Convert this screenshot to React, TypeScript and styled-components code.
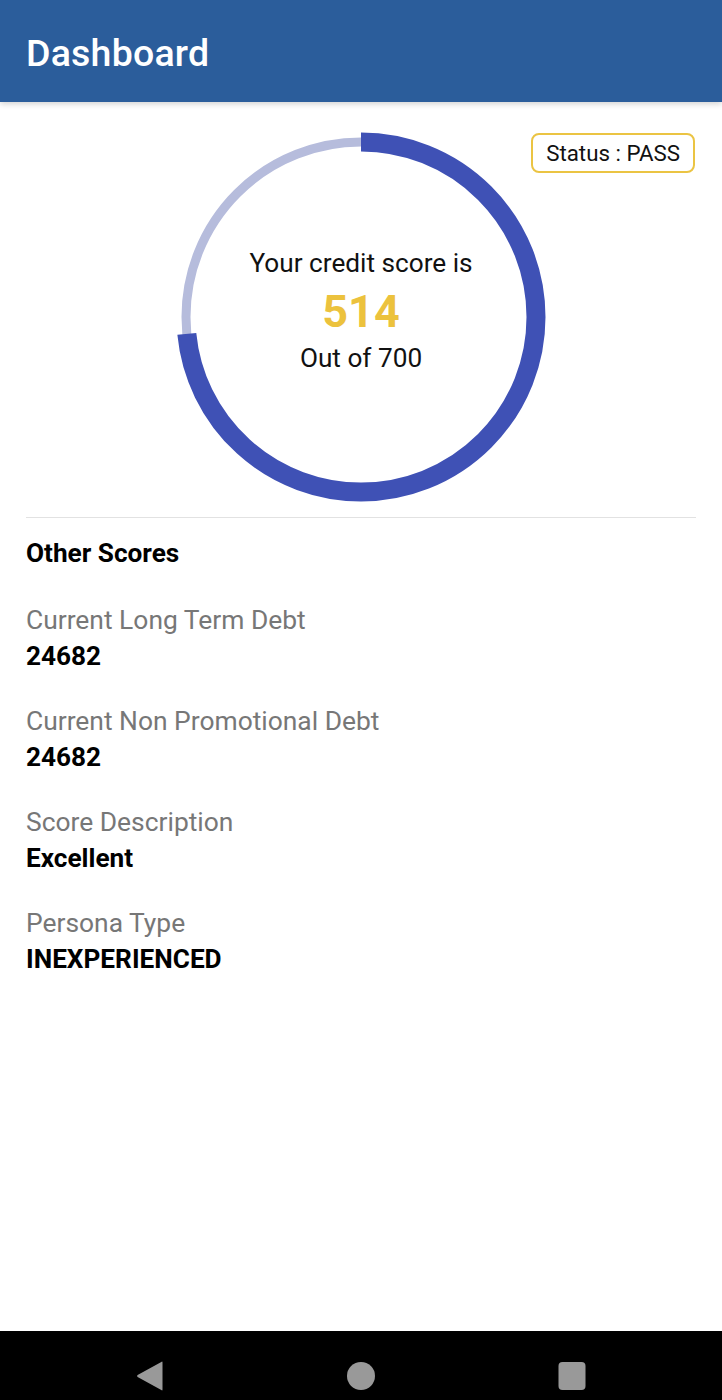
import { FC } from 'react'
import styled, { createGlobalStyle } from 'styled-components'

const GlobalStyle = createGlobalStyle`
  html, body {
    margin: 0;
    padding: 0;
    background: #ffffff;
  }
  body {
    font-family: Roboto, 'Noto Sans', sans-serif;
    color: #000000;
  }
`

const score: number = 514
const maxScore: number = 700
const radius: number = 175
const circumference: number = 2 * Math.PI * radius

const Screen = styled.div`
  display: flex;
  flex-direction: column;
  height: 1400px;
  overflow: hidden;
`

const AppBar = styled.header`
  height: 102px;
  flex-shrink: 0;
  box-sizing: border-box;
  background-color: #2b5d9b;
  display: flex;
  align-items: center;
  padding: 3px 26px 0;
  box-shadow: 0 2px 6px rgba(0, 0, 0, 0.18);
  position: relative;
  z-index: 1;
`

const Title = styled.h1`
  margin: 0;
  color: #ffffff;
  font-size: 37.5px;
  font-weight: 500;
  letter-spacing: 0.2px;
`

const Content = styled.main`
  flex: 1;
  padding: 0 26px;
  display: flex;
  flex-direction: column;
`

const ScoreSection = styled.section`
  position: relative;
  display: flex;
  justify-content: center;
  padding-top: 30px;
  padding-bottom: 15px;
  border-bottom: 1px solid #e2e2e2;
`

const StatusBadge = styled.div`
  position: absolute;
  top: 31px;
  right: 1px;
  border: 2px solid #ebc443;
  border-radius: 8px;
  padding: 0 13px;
  height: 36px;
  display: flex;
  align-items: center;
  font-size: 22.3px;
  color: #111111;
`

const Gauge = styled.div`
  display: grid;
  width: 370px;
  height: 370px;
  & > * {
    grid-area: 1 / 1;
  }
`

const GaugeText = styled.div`
  display: flex;
  flex-direction: column;
  align-items: center;
  justify-content: center;
  padding-bottom: 13px;
`

const Caption = styled.div`
  font-size: 26.2px;
  line-height: 30px;
  color: #111111;
`

const ScoreValue = styled.div`
  font-size: 45px;
  font-weight: 700;
  line-height: 50px;
  margin: 9px 0 6px;
  color: #ecc23d;
`

const SectionTitle = styled.h2`
  margin: 20px 0 34px;
  font-size: 26.2px;
  line-height: 30px;
  font-weight: 700;
`

const InfoList = styled.div`
  display: flex;
  flex-direction: column;
  gap: 29px;
`

const InfoItem = styled.div`
  display: flex;
  flex-direction: column;
`

const InfoLabel = styled.div`
  font-size: 26.4px;
  line-height: 36px;
  color: #777777;
`

const InfoValue = styled.div`
  font-size: 26.2px;
  line-height: 36px;
  font-weight: 700;
  color: #000000;
`

const NavBar = styled.nav`
  height: 69px;
  flex-shrink: 0;
  box-sizing: border-box;
  background: #000000;
  display: flex;
  align-items: center;
  justify-content: center;
  gap: 181px;
  padding-top: 21px;
`

const NavIcon = styled.svg`
  width: 30px;
  height: 30px;
  fill: #999999;
`

interface InfoRow {
  label: string
  value: string
}

const rows: InfoRow[] = [
  { label: 'Current Long Term Debt', value: '24682' },
  { label: 'Current Non Promotional Debt', value: '24682' },
  { label: 'Score Description', value: 'Excellent' },
  { label: 'Persona Type', value: 'INEXPERIENCED' },
]

const ScoreGauge: FC<{ value: number; max: number }> = ({ value, max }) => {
  const progress = circumference * (value / max)
  return (
    <Gauge>
      <svg width="370" height="370" viewBox="0 0 370 370">
        <circle cx="185" cy="185" r={radius} fill="none" stroke="#b6bcdc" strokeWidth="9" />
        <circle
          cx="185"
          cy="185"
          r={radius}
          fill="none"
          stroke="#3f51b5"
          strokeWidth="19"
          strokeDasharray={`${progress} ${circumference}`}
          transform="rotate(-90 185 185)"
        />
      </svg>
      <GaugeText>
        <Caption>Your credit score is</Caption>
        <ScoreValue>{value}</ScoreValue>
        <Caption>Out of {max}</Caption>
      </GaugeText>
    </Gauge>
  )
}

const App: FC = () => {
  return (
    <>
      <GlobalStyle />
      <Screen>
        <AppBar>
          <Title>Dashboard</Title>
        </AppBar>
        <Content>
          <ScoreSection>
            <ScoreGauge value={score} max={maxScore} />
            <StatusBadge>Status : PASS</StatusBadge>
          </ScoreSection>
          <SectionTitle>Other Scores</SectionTitle>
          <InfoList>
            {rows.map((row) => (
              <InfoItem key={row.label}>
                <InfoLabel>{row.label}</InfoLabel>
                <InfoValue>{row.value}</InfoValue>
              </InfoItem>
            ))}
          </InfoList>
        </Content>
        <NavBar>
          <NavIcon viewBox="0 0 30 30">
            <path d="M27.5 1.5 L27.5 28.5 Q27.5 30 26.3 29.1 L2.6 16.1 Q1.5 15 2.6 13.9 L26.3 0.9 Q27.5 0 27.5 1.5 Z" />
          </NavIcon>
          <NavIcon viewBox="0 0 30 30">
            <circle cx="15" cy="15" r="14" />
          </NavIcon>
          <NavIcon viewBox="0 0 30 30">
            <rect x="1.5" y="1" width="27" height="28" rx="4" />
          </NavIcon>
        </NavBar>
      </Screen>
    </>
  )
}

export default App
